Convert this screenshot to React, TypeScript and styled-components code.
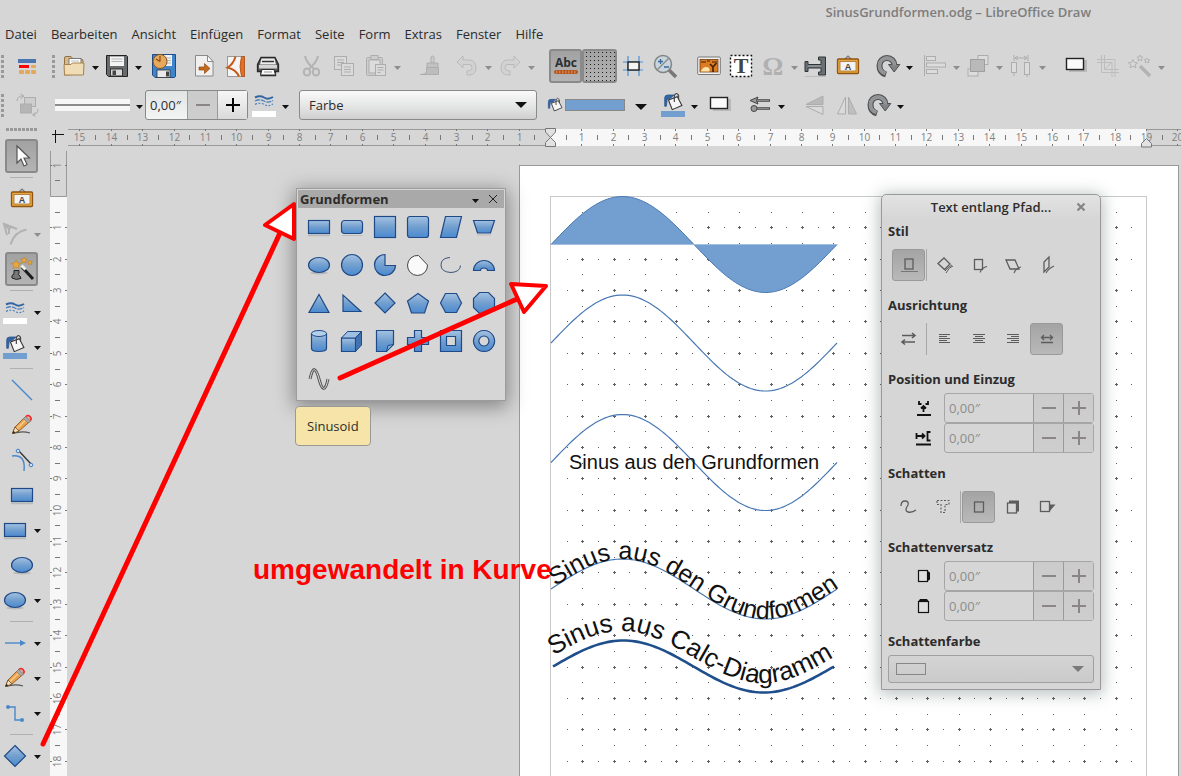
import React from "react";
import styled, { createGlobalStyle } from "styled-components";

const GlobalStyle = createGlobalStyle`
  * { box-sizing: border-box; }
  html, body { margin: 0; height: 100%; background: #d6d6d6; }
  body { font: 13px/20px "Open Sans", "Noto Sans", sans-serif; color: #2c2c2c; }
  button, input, select { font: inherit; color: inherit; margin: 0; padding: 0; border: 0; background: none; border-radius: 0; }
  svg { display: block; flex: none; }
`;

/* ---------- frame ---------- */

const Window = styled.div`
  position: relative;
  display: flex;
  flex-direction: column;
  height: 100vh;
  overflow: hidden;
  background: #d6d6d6;
`;

const TitleBar = styled.header`
  display: flex;
  justify-content: flex-end;
  padding: 2px 90px 2px 0;
  font-size: 13px;
  font-weight: 600;
  color: #7d7d7d;
`;

const MenuBar = styled.nav`
  display: flex;
  gap: 14px;
  padding: 0 5px 1px;
`;

const MenuItem = styled.button`
  white-space: nowrap;
`;

const Toolbar = styled.div<{ $height: number }>`
  display: flex;
  align-items: center;
  height: ${(p) => p.$height}px;
  flex: none;
`;

const Handle = styled.span`
  width: 3px;
  height: 23px;
  margin: 0 3px 0 1px;
  flex: none;
  background: repeating-linear-gradient(#999 0 3px, transparent 3px 5px);
`;

const Space = styled.span<{ $w: 4 | 8 | 12 }>`
  width: ${(p) => p.$w}px;
  flex: none;
`;

const Tool = styled.button<{ $active?: boolean; $w?: number }>`
  display: flex;
  align-items: center;
  justify-content: center;
  flex: none;
  width: ${(p) => p.$w ?? 32}px;
  height: 34px;
  border: ${(p) => (p.$active ? "2px solid #8a8a8a" : "0")};
  border-radius: 3px;
  background: ${(p) => (p.$active ? "linear-gradient(#a2a2a2, #b4b4b4)" : "none")};
`;

const CaretButton = styled.button<{ $w?: number }>`
  display: flex;
  align-items: center;
  justify-content: center;
  width: ${(p) => p.$w ?? 11}px;
  height: 34px;
  padding-top: 3px;
  flex: none;
`;

const LinePreview = styled.button`
  display: flex;
  align-items: center;
  width: 75px;
  height: 12px;
  flex: none;
  background: #f7f7f7;
  &::before {
    content: "";
    flex: 1;
    height: 2px;
    background: #8c8c8c;
  }
`;

const ColorPreview = styled.button`
  width: 60px;
  height: 12px;
  flex: none;
  border: 1px solid #888;
  background: #729fcf;
`;

const Spin = styled.div<{ $disabled?: boolean; $w: number }>`
  display: flex;
  width: ${(p) => p.$w}px;
  height: 30px;
  flex: none;
  border: 1px solid ${(p) => (p.$disabled ? "#a6a6a6" : "#888")};
  border-radius: 3px;
  color: ${(p) => (p.$disabled ? "#8c8c8c" : "#2c2c2c")};
  background: ${(p) => (p.$disabled ? "#d6d6d6" : "linear-gradient(#e2e4e4, #f3f4f4)")};
`;

const SpinEntry = styled.input`
  flex: 1;
  min-width: 0;
  padding: 0 4px;
`;

const SpinButton = styled.button<{ $on?: boolean }>`
  display: flex;
  align-items: center;
  justify-content: center;
  width: 30px;
  flex: none;
  border-left: 1px solid #9a9a9a;
  color: ${(p) => (p.$on ? "#000" : "#8a8686")};
  background: ${(p) => (p.$on ? "linear-gradient(#f6f6f6, #dadada)" : "linear-gradient(#cbcbcb, #cecece)")};
`;

const SelectBox = styled.div<{ $w?: number; $flat?: boolean }>`
  position: relative;
  display: flex;
  align-items: center;
  height: ${(p) => (p.$flat ? 28 : 30)}px;
  width: ${(p) => (p.$w ? p.$w + "px" : "auto")};
  flex: none;
  border: 1px solid ${(p) => (p.$flat ? "#a0a0a0" : "#8a8a8a")};
  border-radius: 3px;
  background: ${(p) => (p.$flat ? "linear-gradient(#d4d4d4, #cacaca)" : "linear-gradient(#fafafa, #e2e3e3 60%, #cfcfcf)")};
`;

const Select = styled.select`
  appearance: none;
  width: 100%;
  height: 100%;
  padding: 0 30px 0 9px;
`;

const SelectArrow = styled.span`
  position: absolute;
  right: 9px;
  pointer-events: none;
`;

const EmptySwatch = styled.span`
  position: absolute;
  left: 7px;
  width: 30px;
  height: 12px;
  border: 1px solid #8a8686;
  pointer-events: none;
`;

const Body = styled.main`
  display: flex;
  flex: 1;
  min-height: 0;
`;

const Toolbox = styled.aside`
  display: flex;
  flex-direction: column;
  width: 50px;
  flex: none;
  padding: 5px 0 0;
  overflow: hidden;
`;

const ToolboxHandle = styled.span`
  width: 31px;
  height: 3px;
  margin: 0 6px 7px;
  flex: none;
  background: repeating-linear-gradient(90deg, #999 0 3px, transparent 3px 4px);
`;

const ToolboxRow = styled.div<{ $split?: boolean }>`
  display: flex;
  align-items: center;
  justify-content: ${(p) => (p.$split ? "flex-start" : "center")};
  width: 43px;
  height: 35px;
  flex: none;
`;

const ToolboxRule = styled.hr`
  width: 23px;
  height: 1px;
  margin: 4px 10px 3px;
  flex: none;
  border: 0;
  background: #b0b0b0;
`;

const Work = styled.div`
  display: flex;
  flex-direction: column;
  flex: 1;
  min-width: 0;
`;

const RulerRow = styled.div`
  display: flex;
  height: 28px;
  flex: none;
  padding-top: 5px;
`;

const HRuler = styled.div`
  flex: 1;
  min-width: 0;
  overflow: hidden;
`;

const CanvasRow = styled.div`
  display: flex;
  flex: 1;
  min-height: 0;
`;

const VRuler = styled.div`
  width: 18px;
  flex: none;
  overflow: hidden;
`;

const Canvas = styled.section`
  position: relative;
  flex: 1;
  min-width: 0;
  overflow: hidden;
`;

/* ---------- floating windows ---------- */

const ShapesWindow = styled.section`
  position: absolute;
  left: 228px;
  top: 37px;
  width: 210px;
  padding: 1px 1px 2px;
  border: 1px solid #9c9c9c;
  background: #d6d6d6;
  box-shadow: 0 4px 18px 2px rgba(0, 0, 0, 0.38);
`;

const ShapesHeader = styled.header`
  display: flex;
  align-items: center;
  height: 18px;
  padding: 0 4px 0 2px;
  background: #a9a9a9;
`;

const WindowTitle = styled.h2`
  flex: 1;
  margin: 0;
  font-size: 13px;
  font-weight: 700;
  line-height: 18px;
`;

const ShapesGrid = styled.div`
  display: grid;
  grid-template-columns: repeat(6, 33px);
  grid-auto-rows: 38px;
  padding-left: 4px;
`;

const ShapeButton = styled.button`
  display: flex;
  align-items: center;
  justify-content: center;
`;

const Tooltip = styled.div`
  position: absolute;
  left: 227px;
  top: 255px;
  padding: 9px 11px;
  border: 1px solid #999;
  border-radius: 4px;
  background: #f7e4a9;
`;

const PathWindow = styled.section`
  position: absolute;
  left: 813px;
  top: 43px;
  width: 220px;
  padding: 0 6px 6px;
  border: 1px solid #999;
  border-radius: 5px 5px 0 0;
  background: linear-gradient(#e2e2e2, #d6d6d6 24px);
  box-shadow: 0 2px 16px 2px rgba(70, 90, 90, 0.38);
`;

const PathHeader = styled.header`
  display: flex;
  align-items: center;
  justify-content: center;
  height: 24px;
  margin-bottom: 2px;
`;

const PathTitle = styled.h2`
  flex: 1;
  margin: 0 0 0 26px;
  text-align: center;
  font-size: 13px;
  font-weight: 600;
`;

const CloseButton = styled.button`
  display: flex;
  width: 26px;
  height: 20px;
  align-items: center;
  justify-content: center;
`;

const Section = styled.fieldset<{ $gap: number }>`
  margin: 0 0 ${(p) => p.$gap}px;
  padding: 0;
  border: 0;
  min-width: 0;
`;

const SectionLabel = styled.legend`
  padding: 0;
  font-weight: 700;
`;

const ButtonRow = styled.div`
  display: flex;
  gap: 1px;
  padding: 8px 4px 0;
`;

const PathButton = styled.button<{ $active?: boolean }>`
  display: flex;
  align-items: center;
  justify-content: center;
  width: 33px;
  height: 32px;
  border: ${(p) => (p.$active ? "1px solid #999" : "0")};
  border-radius: 3px;
  background: ${(p) => (p.$active ? "linear-gradient(#a4a4a4, #b9b9b9)" : "none")};
`;

const Divider = styled.span`
  width: 1px;
  height: 32px;
  background: #a8a8a8;
`;

const SpinRow = styled.label`
  display: flex;
  align-items: center;
  justify-content: flex-end;
  gap: 9px;
`;

const SpinStack = styled.div`
  padding-top: 4px;
`;

const Annotations = styled.svg`
  position: absolute;
  inset: 0;
  width: 100%;
  height: 100%;
  pointer-events: none;
`;

/* ---------- icons ---------- */

const BLUE = { fill: "url(#blue)", stroke: "#204a87", strokeWidth: 1.2 };
const GREY = { fill: "#cdcdcd", stroke: "#adadad", strokeWidth: 1 };
const LINE = { fill: "none", stroke: "#5c5c5c", strokeWidth: 1.3 };
const CURVE = { fill: "none", stroke: "#4a88cc", strokeWidth: 1.4 };

const pencil = (
  <>
    <path d="M3 20.500q9-3 17-.5" fill="none" stroke="#555" strokeWidth="1.2" />
    <path d="M2.500 20.500l2.500-6.500L15.500 3.500l5 4.500L9 18z" fill="#e9a14c" stroke="#8a5a24" strokeWidth=".9" />
    <path d="M6.500 16L17.500 5.500" stroke="#f9cf94" strokeWidth="1.300" />
    <path d="M2.500 20.500l2.500-6.500 4 4z" fill="#f6dfbb" stroke="#6b4a24" strokeWidth=".8" />
    <path d="M2.500 20.500l1-2.700 1.700 1.700z" fill="#222" />
    <path d="M13.500 5.500l4.500 4.500 2.500-2-5-4.500z" fill="#a9a9a9" stroke="#777" strokeWidth=".6" />
    <path d="M16 3.500q2-2 4 0t.5 4" fill="#d5a9a0" stroke="#ef2929" strokeWidth="1.600" />
  </>
);

const bucket = (
  <>
    <path d="M2 17V7q0-3.500 4-3.500h7L9 7.500l-4 1-1 8.500z" fill="#3465a4" stroke="#204a87" strokeWidth=".8" />
    <path d="M6.500 9.500L17 5.500 22.500 16 11 21z" fill="#f6f6f6" stroke="#333" strokeWidth="1.300" />
    <path d="M13.500 12V4q2.500-4.500 5 0v5" fill="none" stroke="#444" strokeWidth="1.400" />
  </>
);

const rotate = (
  <>
    <path d="M10 20.500Q3.500 18.500 3.500 11.500a7.500 7.500 0 0 1 15 0" fill="none" stroke="#4d4f51" strokeWidth="6" />
    <path d="M12.500 10.500h11.300L18.200 18z" fill="#808386" stroke="#4d4f51" strokeWidth="1" />
    <path d="M9.500 19.500Q3.500 17.500 3.500 11.500a7.500 7.500 0 0 1 15 0" fill="none" stroke="#929496" strokeWidth="3.800" />
  </>
);

const label = (
  <>
    <path d="M9 5l3-3 3 3" fill="none" stroke="#777" strokeWidth="1.200" />
    <rect x="1.500" y="5" width="21" height="14.500" rx="1" fill="#e9a840" stroke="#8f5312" strokeWidth="1.300" />
    <rect x="4" y="7.500" width="16" height="9.500" fill="#f3f3f3" stroke="#a8702c" strokeWidth=".8" />
    <text x="12" y="15.500" textAnchor="middle" fontFamily="Liberation Sans, sans-serif" fontWeight="700" fontSize="9" fill="#444">A</text>
  </>
);

const undo = <path d="M2 8l6-6v4h7q6 1 6 8 0 6-6 7h-3v-4q5 0 5-3.500T14 10.500H8V14z" fill="#d2d2d2" stroke="#bababa" />;

const ICONS: Record<string, React.ReactNode> = {
  layout: (
    <>
      <rect x="3" y="5" width="18" height="4" fill="#4b75b0" />
      <rect x="4" y="11" width="10" height="3" fill="#f00" />
      {[[16, 11], [4, 16], [10, 16], [16, 16]].map(([x, y]) => (
        <rect key={x + "-" + y} x={x} y={y} width="5" height={y === 11 ? 3 : 4} rx="1" fill="#e2a95c" />
      ))}
    </>
  ),
  open: (
    <>
      <path d="M2.500 21V4q0-1.500 1.500-1.500h5L11 5h8q2 0 2 2v13z" fill="#d9b98a" stroke="#8f7044" />
      <path d="M7 4.500h12V12H7z" fill="#fff" stroke="#777" />
      <path d="M9 7h8M9 9.500h8" stroke="#bbb" />
      <path d="M2 10.500h7l1.500-1.500H22l-.5 12h-19z" fill="#f0dcb5" stroke="#a5834f" />
    </>
  ),
  save: (
    <>
      <path d="M1.500 1.500h20l1 1v20h-19l-2-2z" fill="#676b6d" stroke="#222" />
      <rect x="5" y="2.500" width="14" height="9.500" fill="#f4f4f4" />
      <path d="M6.500 5h11M6.500 7.500h11" stroke="#b5b5b5" />
      <rect x="5.500" y="15" width="12" height="7" fill="#d8d8d8" stroke="#333" />
      <rect x="7.500" y="16.500" width="3.500" height="4.500" fill="#444" />
    </>
  ),
  saveAs: (
    <>
      <path d="M.5.5h23v22l-1 1H3l-2.500-2.500z" fill="#3f85cb" stroke="#1f4b86" />
      <rect x="12" y="1" width="8" height="11" fill="#f2f2f2" />
      <path d="M14 4h5M14 6.500h5M14 9h5" stroke="#b5b5b5" />
      <rect x="5" y="16" width="13" height="7.500" fill="#e9e9e9" stroke="#333" strokeWidth=".8" />
      <rect x="14" y="17.500" width="3" height="5" fill="#444" />
      <circle cx="8" cy="7.500" r="7" fill="#e9a95c" stroke="#7f5423" />
      <path d="M8 7.500V2M8 7.500L4 5" stroke="#8a4a12" strokeWidth="1.200" />
    </>
  ),
  export: (
    <>
      <path d="M3.500 1.500h12l5.500 6v14.500h-17.500z" fill="#f0f0f0" stroke="#8a8a8a" />
      <path d="M15.500 1.500v6H21z" fill="#fff" stroke="#8a8a8a" />
      <path d="M7 13h5.500v-3.500l5.500 5-5.500 5V16H7z" fill="#c46a1e" stroke="#8f4a10" strokeWidth=".7" />
    </>
  ),
  pdf: (
    <>
      <rect x="3.500" y="2.500" width="17" height="20" fill="#f4f4f4" stroke="#999" />
      <path d="M11.500 2.500Q9.500 10 3.500 13.500Q12 15.500 15 22.500" fill="none" stroke="#c4591b" strokeWidth="2" />
      <path d="M20.500 2.500h-3q-3 10 0 20h3z" fill="#e0702a" stroke="#b04c12" strokeWidth=".8" />
    </>
  ),
  print: (
    <>
      <path d="M5 3.500h14l3.500 7v7h-3v4H5v-4H1.500v-7z" fill="#555" stroke="#2a2a2a" strokeWidth="1.300" />
      <path d="M5.500 4.500h13l1.500 6H4z" fill="#ececec" />
      <path d="M6 7.500h12" stroke="#333" strokeWidth="1.500" />
      <rect x="3" y="11" width="18" height="3.500" fill="#d5d5d5" />
      <path d="M6 15.500h12l1.500 5.500h-15z" fill="#fafafa" stroke="#333" />
      <path d="M8 18h8" stroke="#999" />
    </>
  ),
  cut: (
    <g fill="none" stroke="#b3b3b3">
      <path d="M5 2q1 6 9 13M18 2q-1 6-9 13" strokeWidth="2" />
      <ellipse cx="7" cy="18" rx="3.200" ry="3.500" strokeWidth="2" />
      <ellipse cx="16" cy="18" rx="3.200" ry="3.500" strokeWidth="2" />
    </g>
  ),
  copy: (
    <g {...GREY}>
      <rect x="2.500" y="2.500" width="12" height="13" fill="#dadada" />
      <path d="M5 6h7M5 8.500h7M5 11h4" />
      <rect x="9.500" y="9.500" width="12" height="12" fill="#dadada" />
      <path d="M12 13h7M12 15.500h7M12 18h7" />
    </g>
  ),
  paste: (
    <g {...GREY}>
      <rect x="2.500" y="3.500" width="16" height="18" rx="1" />
      <rect x="7" y="1.500" width="7" height="4" />
      <rect x="5" y="6" width="11" height="13" fill="#dcdcdc" />
      <rect x="11.500" y="10.500" width="10" height="11" fill="#dadada" />
      <path d="M13.500 13.500h6M13.500 16h6M13.500 18.500h3" />
    </g>
  ),
  brush: (
    <g {...GREY}>
      <path d="M1 20.500q6 0 6.500-3v-4h12v7z" fill="#bdbdbd" />
      <path d="M12 9V3q1.500-2 3 0v6z" />
      <path d="M8 9h11v4.500H8z" fill="#c2c2c2" />
    </g>
  ),
  undo,
  redo: <g transform="matrix(-1 0 0 1 24 0)">{undo}</g>,
  spell: (
    <>
      <text x="12" y="13" textAnchor="middle" fontFamily="Open Sans, sans-serif" fontWeight="700" fontSize="12" fill="#2b2f33">Abc</text>
      <path d="M2 18h20" fill="none" stroke="#a8572a" strokeWidth="4" strokeLinecap="round" />
      <path d="M2 18h20" fill="none" stroke="#e07a34" strokeWidth="3" strokeDasharray="1.500 1.500" />
    </>
  ),
  grid: (
    <path
      d={[-2, 2, 6, 10, 14, 18, 22, 26].map((y) => `M-2 ${y + 0.5}h29`).join("")}
      stroke="#1c1c1c"
      strokeDasharray="1 3"
    />
  ),
  snap: (
    <>
      <path d="M7 2v20M18 2v20M2 8h20M2 16h20" stroke="#4a90d9" strokeWidth="1.200" />
      <rect x="7" y="8" width="11" height="8" fill="#f4f4f4" stroke="#222" strokeWidth="1.400" />
    </>
  ),
  zoom: (
    <>
      <path d="M16 16l7 7" stroke="#777" strokeWidth="3.600" />
      <circle cx="10" cy="10" r="8.500" fill="#c9d5de" stroke="#848484" strokeWidth="1.500" />
      <path d="M4.500 15.500L15.500 4.500" stroke="#888" strokeWidth="1.200" />
      <path d="M5 7.500h5M7.500 5v5M11 13h5" stroke="#3b6a9c" strokeWidth="1.300" />
    </>
  ),
  image: (
    <>
      <rect x=".7" y="3" width="22.600" height="17.500" rx="1" fill="#f3f3f3" stroke="#777" />
      <rect x="3" y="5.500" width="18" height="12.500" fill="#dd7d23" stroke="#6b3c14" strokeWidth=".8" />
      <path d="M3.500 17.500q4-7 9-3v3z" fill="#fbe3a4" />
      <path d="M16 18v-5l-3-3M16 13l3.500-4" fill="none" stroke="#40200a" strokeWidth="1.600" />
      <path d="M4 8h5M10 7h3M15 8h5" stroke="#7a3c0c" strokeWidth="1.500" />
    </>
  ),
  text: (
    <>
      <rect x="1.500" y="1.500" width="21" height="21" fill="#fff" stroke="#111" strokeWidth="1.400" strokeDasharray="2 2" />
      <text x="12" y="19" textAnchor="middle" fontFamily="Liberation Serif, serif" fontWeight="700" fontSize="22" fill="#444">T</text>
    </>
  ),
  omega: (
    <text x="12" y="21" textAnchor="middle" fontFamily="Liberation Serif, serif" fontWeight="700" fontSize="26" fill="#b0b0b0">Ω</text>
  ),
  special: (
    <>
      <path d="M1 7.500v10h3V14h13v4h-2.500v3h7V3h-7v3H17v4.500H4v-3z" fill="#6b7074" stroke="#2e3436" />
      <path d="M4 12h13" stroke="#a9adb0" />
      <path d="M1 22.500h21" stroke="#bcbcbc" />
    </>
  ),
  label,
  rotate,
  align: (
    <g {...GREY} fill="#dcdcdc">
      <path d="M1.500 1v21" />
      <rect x="3.500" y="2.500" width="9" height="4" />
      <rect x="3.500" y="9" width="19" height="4" />
      <rect x="3.500" y="15.500" width="11" height="4" />
    </g>
  ),
  arrange: (
    <g {...GREY}>
      <rect x="12" y="1.500" width="10" height="9" fill="#dcdcdc" />
      <rect x="2" y="15" width="10" height="7" fill="#dcdcdc" />
      <rect x="4.500" y="5.500" width="14" height="12" fill="#b9b9b9" stroke="#9f9f9f" />
    </g>
  ),
  distribute: (
    <g {...GREY} fill="#dcdcdc">
      <path d="M5 1v6M19 1v6M6 4h12M9 2L6 4l3 2M15 2l3 2-3 2" fill="none" />
      <rect x="2.500" y="8.500" width="5" height="10" />
      <rect x="15.500" y="8.500" width="5" height="12" />
      <path d="M5 19v3M18 21v2" />
    </g>
  ),
  shadow: (
    <>
      <rect x="5" y="6" width="18" height="12" fill="#b8b8b8" />
      <rect x="2.500" y="4.500" width="17" height="11" fill="#fbfbfb" stroke="#222" strokeWidth="1.400" />
    </>
  ),
  crop: (
    <g fill="none" stroke="#bdbdbd">
      <path d="M5.500 1v17.500H23" strokeWidth="1" />
      <path d="M8.500 1v14.500H23M1 5.500h18V23M1 8.500h15V23" strokeWidth="1" />
      <path d="M9 15l6-6" />
    </g>
  ),
  wandGrey: (
    <g fill="none" stroke="#b3b3b3">
      <path d="M12 12l10 10" strokeWidth="3.500" />
      <path d="M5 5.500l1.500 3 3 .3-2.300 2 .7 3L5 12.200l-3 1.600.7-3-2.300-2 3-.3zM12 1l1 2 2 .2-1.500 1.500.5 2-2-1-2 1 .5-2L9 3.200l2-.2zM19 4l1 1.500 1.800.2-1.300 1.300.4 1.800-1.900-.9-1.700.9.300-1.800L16.300 5.700l1.800-.2z" />
    </g>
  ),
  transform: (
    <g {...GREY}>
      <rect x="9.500" y="4.500" width="11" height="9" />
      <rect x="5.500" y="11" width="11" height="9" fill="#b5b5b5" />
      <path d="M2 8q0-5 6-5M5.500 1L9 3 5.500 6M23 16q0 5-5 6M20.500 19l-3 3 3 1.500" fill="none" />
    </g>
  ),
  lineColor: (
    <>
      <path d="M3 4.500q5-2.500 9 0t9-.5" fill="none" stroke="#3465a4" strokeWidth="2" />
      <path d="M3 8q5-2.500 9 0t9-.5" fill="none" stroke="#4b7fc0" strokeWidth="1.300" strokeDasharray="5 1" />
      <path d="M3 11.500q5-2.500 9 0t9-.5" fill="none" stroke="#4b7fc0" strokeWidth="1.200" strokeDasharray="2 1.500" />
      <rect x="0" y="18" width="24" height="6" fill="#fff" />
    </>
  ),
  fillColor: (
    <>
      <g transform="translate(2 -1) scale(.84)">{bucket}</g>
      <rect x="0" y="18" width="24" height="6" fill="#729fcf" />
    </>
  ),
  bucket,
  arrows: (
    <g stroke="#444" fill="#9a9a9a">
      <path d="M8 7.500h14M8 15.500h14" strokeWidth="2.400" />
      <path d="M8 7.500h13M8 15.500h13" stroke="#9a9a9a" strokeWidth=".8" />
      <path d="M2 7.500l8-3.500-1.500 3.500L10 11z" />
      <circle cx="6" cy="15.500" r="3" />
    </g>
  ),
  flipV: (
    <g {...GREY}>
      <path d="M3 11.500L20 3v8.500z" fill="#b9b9b9" />
      <path d="M3 13.500L20 21.500v-8z" fill="#dadada" />
    </g>
  ),
  flipH: (
    <g {...GREY}>
      <path d="M10.500 4v17H2.500z" fill="#dadada" />
      <path d="M13.500 4v17h8z" fill="#bfbfbf" />
    </g>
  ),
  select: <path d="M7 2v17l4-4 3 7 3-1.500-3-6.500h5.500z" fill="#fff" stroke="#555" strokeWidth="1.200" />,
  pathText: (
    <>
      <path d="M4 13L1 2l13 5M2 3l4 4 2 -2M6 12V6" fill="none" stroke="#b2b2b2" strokeWidth="2" />
      <path d="M7.500 22.500Q11 10 23.500 7.500" fill="none" stroke="#b2b2b2" strokeWidth="2" />
    </>
  ),
  wand: (
    <>
      <path d="M12 10l11 12" stroke="#1c1c1c" strokeWidth="3" />
      <path d="M11.500 8.500l4 4" stroke="#eee" strokeWidth="3" />
      <path d="M6 3l1.500 3 3.500.3-2.700 2.200.9 3.200L6 10l-3 1.700.9-3.200L1 6.300 4.500 6zM14 0l1 2 2.500.2-2 1.600.7 2.400-2.200-1.300-2.200 1.300.7-2.400-2-1.600L13 2zM20 3l.8 1.500 1.700.2-1.200 1.200.3 1.700-1.600-.8-1.600.8.3-1.700L17.500 4.700l1.700-.2z" fill="#e9a840" stroke="#b8791c" strokeWidth=".5" />
      <path d="M2 21q-1-3 2-4V13.500h5V16q-2 1.500 1 3l1 2.500q-5 2-9-.5z" fill="#777" stroke="#222" />
    </>
  ),
  line: <path d="M2 2l20 20" {...CURVE} />,
  pencil,
  curve: (
    <>
      <path d="M2 8q14-2 12 15" {...CURVE} />
      <path d="M8 2l14 15" stroke="#333" strokeWidth="1.300" />
      <circle cx="8" cy="3" r="1.800" fill="#cfe2f5" stroke="#3f7fc6" />
      <circle cx="21" cy="17" r="1.800" fill="#cfe2f5" stroke="#3f7fc6" />
    </>
  ),
  rect: (
    <>
      <path d="M1 20.500h22" stroke="#b9b9b9" strokeWidth="1.500" />
      <rect x="1.500" y="5.500" width="21" height="13" {...BLUE} />
    </>
  ),
  ellipse: (
    <>
      <ellipse cx="12" cy="20" rx="9" ry="1.500" fill="#b9b9b9" />
      <ellipse cx="12" cy="12" rx="10.500" ry="7.500" {...BLUE} />
    </>
  ),
  arrow: (
    <>
      <path d="M2 12h17" {...CURVE} />
      <path d="M17 9l6 3-6 3z" fill="#4a88cc" />
    </>
  ),
  connector: (
    <>
      <path d="M5 6h7v13h7" {...CURVE} />
      <circle cx="5" cy="6" r="2" fill="#4a88cc" />
      <circle cx="19" cy="19" r="2" fill="#4a88cc" />
    </>
  ),
  diamondBig: <path d="M12 1.500L22.500 12 12 22.500 1.500 12z" {...BLUE} />,
};

const SHAPES: [string, React.ReactNode][] = [
  ["Rechteck", ICONS.rect],
  ["Rechteck, abgerundet", <><path key="s" d="M2 20.500h20" stroke="#bbb" /><rect key="r" x="1.500" y="5.500" width="21" height="13" rx="3" {...BLUE} /></>],
  ["Quadrat", <rect x="1.500" y="1.500" width="21" height="21" {...BLUE} />],
  ["Quadrat, abgerundet", <rect x="1.500" y="1.500" width="21" height="21" rx="2.500" {...BLUE} />],
  ["Parallelogramm", <path d="M6.500 1.500h16l-5 21h-16z" {...BLUE} />],
  ["Trapez", <><path key="s" d="M5 20h14" stroke="#bbb" /><path key="t" d="M1.500 5.500h21l-4 12.500h-13z" {...BLUE} /></>],
  ["Ellipse", ICONS.ellipse],
  ["Kreis", <circle cx="12" cy="12" r="10.500" {...BLUE} />],
  ["Kreissektor", <path d="M12 1.500v11h10.500A10.500 10.500 0 1 1 12 1.500z" {...BLUE} />],
  ["Kreissegment", <path d="M12.500 2.500l9 9.500A10 10 0 1 1 12.500 2.500z" fill="#fafafa" stroke="#444" />],
  ["Kreisbogen", <path d="M11 4.500Q2 5 2 12t10 7.500q9-.5 9.500-7" fill="none" stroke="#3b5578" />],
  ["Halbbogen", <path d="M1.500 17.500a10.500 10 0 0 1 21 0h-7a3.500 2.500 0 0 0-7 0z" {...BLUE} />],
  ["Dreieck", <path d="M12 3.500L22 21.500H2z" {...BLUE} />],
  ["Rechtwinkliges Dreieck", <path d="M3 4v16.500h18z" {...BLUE} />],
  ["Raute", <path d="M12 2l10 10-10 10L2 12z" {...BLUE} />],
  ["Fünfeck", <path d="M12 2.500l10.500 7.500-4 12H5.500l-4-12z" {...BLUE} />],
  ["Sechseck", <path d="M6.500 2.500h11L22.500 12l-5 9.500h-11L1.500 12z" {...BLUE} />],
  ["Achteck", <path d="M7.500 1.500h9l6 6v9l-6 6h-9l-6-6v-9z" {...BLUE} />],
  ["Zylinder", <><path key="a" d="M4.500 4.500v15q0 3 7.500 3t7.500-3v-15z" {...BLUE} /><ellipse key="b" cx="12" cy="4.500" rx="7.500" ry="3" fill="#b3cfe9" stroke="#204a87" /></>],
  ["Würfel", <><path key="a" d="M1.500 9h14v13.500h-14z" {...BLUE} /><path key="b" d="M1.500 9l6-6.500h14L15.500 9z" fill="#9fc0e0" stroke="#204a87" /><path key="c" d="M15.500 9l6-6.500V16l-6 6.500z" fill="#4273b0" stroke="#204a87" /></>],
  ["Gefaltete Ecke", <><path key="a" d="M3.500 1.500h17v14l-7 7h-10z" {...BLUE} /><path key="b" d="M13.500 22.500l1.500-6 5.500-1z" fill="#7fabd8" stroke="#204a87" /></>],
  ["Kreuz", <path d="M8.500 1.500h7v7h7v7h-7v7h-7v-7h-7v-7h7z" {...BLUE} />],
  ["Rahmen", <path d="M1.500 1.500h21v21h-21zM7.500 7.500v9h9v-9z" fillRule="evenodd" {...BLUE} />],
  ["Ring", <path d="M12 1.500a10.500 10.500 0 1 0 .1 0zM12 7a5 5 0 1 1-.1 0z" fillRule="evenodd" {...BLUE} />],
  ["Sinusoid", <><path key="a" d="M3 12C6-2 9 1 12 12s6 14 9 0" fill="none" stroke="#555" strokeWidth="3" /><path key="b" d="M3 12C6-2 9 1 12 12s6 14 9 0" fill="none" stroke="#e0e0e0" strokeWidth="1" /></>],
];

const PATH_ICONS: Record<string, React.ReactNode> = {
  off: <><rect key="a" x="8" y="6" width="8" height="10" {...LINE} /><path key="b" d="M4 18.500h17" stroke="#777" /></>,
  turn: <><path key="a" d="M11 5l6 6-5.500 5.500L5 10.500z" {...LINE} /><path key="b" d="M13 20q3-6 7-7M12 18q3-4 7-6" {...LINE} strokeWidth="1" /></>,
  upright: <><rect key="a" x="7.500" y="6.500" width="8" height="10" {...LINE} /><path key="b" d="M13 19.500q2-5 7-6" {...LINE} strokeWidth="1.100" /></>,
  slantH: <><path key="a" d="M5 7h9l4 9H9z" {...LINE} /><path key="b" d="M13 20q2-5 7-6" {...LINE} strokeWidth="1.100" /></>,
  slantV: <><path key="a" d="M9 9l5-5v10l-5 5z" {...LINE} /><path key="b" d="M11 20q3-5 8-7" {...LINE} strokeWidth="1.100" /></>,
  swap: <path d="M5 8.500h13M5 15h13M15 6l3 2.500-3 2.500M8 12.500L5 15l3 2.500" {...LINE} strokeWidth="1.600" />,
  left: <path d="M6 7.500h11M6 9.500h8M6 11.500h11M6 13.500h8M6 15.500h11" {...LINE} strokeWidth="1" />,
  center: <path d="M6 7.500h12M8 9.500h8M6 11.500h12M8 13.500h8M6 15.500h12" {...LINE} strokeWidth="1" />,
  right: <path d="M6 7.500h12M10 9.500h8M6 11.500h12M10 13.500h8M6 15.500h12" {...LINE} strokeWidth="1" />,
  auto: <path d="M6.500 10.500h11M9 8L6.500 10.500 9 13M15 8l2.500 2.500L15 13M6 15.500h12" {...LINE} />,
  outline: <path d="M4 11q0-5 4-5t3 4q-4 6 0 7t8-2" {...LINE} />,
  dashedT: <path d="M6 5.500h12v4h-4v8h-4v-8H6z" {...LINE} strokeDasharray="2 1.500" strokeWidth="1.100" />,
  noShadow: <rect x="7.500" y="7" width="9" height="10" {...LINE} />,
  vertShadow: <><rect key="a" x="8" y="5.500" width="10" height="11" fill="#5c5c5c" /><rect key="b" x="6.500" y="8" width="9" height="10" fill="#d6d6d6" stroke="#5c5c5c" strokeWidth="1.300" /></>,
  slantShadow: <><path key="a" d="M14 9.500h6.500L14 17z" fill="#5c5c5c" /><rect key="b" x="5.500" y="6.500" width="9" height="10" fill="#d6d6d6" stroke="#5c5c5c" strokeWidth="1.300" /></>,
  distance: <path d="M8 5v3h2.500M17 5v3h-2.500M6 19h14M12.500 16V10M10 12.500l2.500-2.500 2.500 2.500" fill="none" stroke="#111" strokeWidth="1.800" />,
  indent: <path d="M5.500 10h8M11 7.500l2.500 2.500-2.500 2.500M5.500 7v6M19.500 6h-3v8.500h3M5 18.500h15" fill="none" stroke="#111" strokeWidth="1.800" />,
  shadowX: <><rect key="a" x="7.500" y="6.500" width="9" height="11" fill="#dedede" stroke="#111" strokeWidth="1.200" /><path key="b" d="M16 6.500l3 2v7l-3 2z" fill="#111" /></>,
  shadowY: <><rect key="a" x="7.500" y="7.500" width="10" height="11" fill="#dedede" stroke="#111" strokeWidth="1.200" /><path key="b" d="M7 8l2-3h7l2 3z" fill="#111" /></>,
};

const Icon = ({ name, size = 24 }: { name: string; size?: number }) => (
  <svg width={size} height={size} viewBox="0 0 24 24" overflow="visible" aria-hidden="true">
    {ICONS[name] ?? PATH_ICONS[name]}
  </svg>
);

const Triangle = ({ color = "#111", wide }: { color?: string; wide?: boolean }) => (
  <svg width={wide ? 12 : 7} height={wide ? 6 : 4} viewBox="0 0 12 6" preserveAspectRatio="none" aria-hidden="true">
    <path d="M0 0h12L6 6z" fill={color} />
  </svg>
);

const Caret = ({ label: text, grey, w, wide }: { label: string; grey?: boolean; w?: number; wide?: boolean }) => (
  <CaretButton aria-label={text + " – Auswahl"} $w={w}>
    <Triangle color={grey ? "#8e8e8e" : "#111"} wide={wide} />
  </CaretButton>
);

type Item = { icon: string; name: string; caret?: boolean; grey?: boolean; active?: boolean; w?: number } | 4 | 8 | 12 | "handle";

const STANDARD: Item[] = [
  "handle", 4,
  { icon: "layout", name: "Seitenlayout" }, 8, "handle",
  { icon: "open", name: "Öffnen", caret: true },
  { icon: "save", name: "Speichern", caret: true }, 4,
  { icon: "saveAs", name: "Speichern unter" }, 8,
  { icon: "export", name: "Exportieren" },
  { icon: "pdf", name: "Als PDF exportieren" },
  { icon: "print", name: "Drucken" }, 12,
  { icon: "cut", name: "Ausschneiden" },
  { icon: "copy", name: "Kopieren" },
  { icon: "paste", name: "Einfügen", caret: true, grey: true }, 12,
  { icon: "brush", name: "Format übertragen" }, 4,
  { icon: "undo", name: "Rückgängig", caret: true, grey: true },
  { icon: "redo", name: "Wiederherstellen", caret: true, grey: true }, 12,
  { icon: "spell", name: "Rechtschreibung", active: true, w: 33 },
  { icon: "grid", name: "Raster anzeigen", active: true, w: 35 },
  { icon: "snap", name: "Hilfslinien" },
  { icon: "zoom", name: "Maßstab" }, 12,
  { icon: "image", name: "Bild" },
  { icon: "text", name: "Textfeld" },
  { icon: "omega", name: "Sonderzeichen", caret: true, grey: true },
  { icon: "special", name: "Fontwork" },
  { icon: "label", name: "Beschriftung" }, 8,
  { icon: "rotate", name: "Drehen", caret: true }, 4,
  { icon: "align", name: "Ausrichten", caret: true, grey: true },
  { icon: "arrange", name: "Anordnen", caret: true, grey: true },
  { icon: "distribute", name: "Verteilen", caret: true, grey: true }, 12,
  { icon: "shadow", name: "Schatten" },
  { icon: "crop", name: "Zuschneiden" },
  { icon: "wandGrey", name: "Filter", caret: true, grey: true },
];

const FORMAT_TAIL: Item[] = [
  8,
  { icon: "fillColor", name: "Füllfarbe", caret: true }, 4,
  { icon: "shadow", name: "Schatten" }, 8,
  { icon: "arrows", name: "Linienenden", caret: true }, 12,
  { icon: "flipV", name: "Vertikal spiegeln" },
  { icon: "flipH", name: "Horizontal spiegeln" },
  { icon: "rotate", name: "Transformationen", caret: true },
];

const Items = ({ list }: { list: Item[] }) => (
  <>
    {list.map((it, i) =>
      it === "handle" ? (
        <Handle key={i} />
      ) : typeof it === "number" ? (
        <Space key={i} $w={it} />
      ) : (
        <React.Fragment key={i}>
          <Tool aria-label={it.name} $active={it.active} $w={it.w}>
            <Icon name={it.icon} />
          </Tool>
          {it.caret && <Caret label={it.name} grey={it.grey} />}
        </React.Fragment>
      )
    )}
  </>
);

const TOOLBOX: ({ icon: string; name: string; caret?: boolean; grey?: boolean; active?: boolean } | null)[] = [
  { icon: "select", name: "Auswählen", active: true }, null,
  { icon: "label", name: "Textfeld" },
  { icon: "pathText", name: "Fontwork", caret: true, grey: true },
  { icon: "wand", name: "Effekte", active: true }, null,
  { icon: "lineColor", name: "Linienfarbe", caret: true },
  { icon: "fillColor", name: "Füllfarbe", caret: true }, null,
  { icon: "line", name: "Linie" },
  { icon: "pencil", name: "Freihandlinie" },
  { icon: "curve", name: "Kurve" },
  { icon: "rect", name: "Rechteck" },
  { icon: "rect", name: "Rechteckformen", caret: true },
  { icon: "ellipse", name: "Ellipse" },
  { icon: "ellipse", name: "Ellipsenformen", caret: true }, null,
  { icon: "arrow", name: "Linien und Pfeile", caret: true },
  { icon: "pencil", name: "Kurven und Polygone", caret: true },
  { icon: "connector", name: "Verbinder", caret: true }, null,
  { icon: "diamondBig", name: "Grundformen", caret: true },
];

const Plus = ({ minus }: { minus?: boolean }) => (
  <svg width="14" height="14" viewBox="0 0 14 14" aria-hidden="true">
    <path d={minus ? "M0 7h14" : "M0 7h14M7 0v14"} stroke="currentColor" strokeWidth="2" />
  </svg>
);

const SpinBox = ({ id, name, disabled, w }: { id: string; name: string; disabled?: boolean; w: number }) => (
  <Spin $disabled={disabled} $w={w}>
    <SpinEntry id={id} aria-label={name} defaultValue="0,00″" disabled={disabled} />
    <SpinButton aria-label={name + " verringern"}><Plus minus /></SpinButton>
    <SpinButton aria-label={name + " erhöhen"} $on={!disabled}><Plus /></SpinButton>
  </Spin>
);

/* ---------- rulers ---------- */

const UNIT = 596 / 19;

const HorizontalRuler = () => {
  const zero = 483;
  const at = (k: number) => Math.round(zero + k * UNIT) - 0.5;
  const ks = Array.from({ length: 36 }, (_, i) => i - 15);
  return (
    <svg width="1113" height="20" aria-hidden="true">
      <path d="M0 1.500H1113M0 17.500H1113" stroke="#999" />
      <rect x="483" y="1" width="595" height="17" fill="#f7f7f7" />
      {ks.map((k) => (
        <g key={k}>
          <path d={`M${at(k + 0.5)} 7v5`} stroke="#777" />
          {k !== 0 && (
            <>
              <path d={`M${at(k)} 1v2M${at(k)} 16v2`} stroke="#777" />
              <text x={at(k)} y="13" textAnchor="middle" fontSize="10" fontFamily="Open Sans, sans-serif" fill="#808080">
                {Math.abs(k)}
              </text>
            </>
          )}
        </g>
      ))}
      <path d="M477.500 .5h10v3.500l-5 5.500-5-5.500zM482.500 9.500l5 5v4h-10v-4z" fill="#e2e2e2" stroke="#777" />
      <path d="M1078.500 10.500l5 5v3.500h-10v-3.500z" fill="#e2e2e2" stroke="#777" />
    </svg>
  );
};

const VerticalRuler = () => {
  const zero = 46;
  const at = (k: number) => Math.round(zero + k * UNIT) - 0.5;
  const ks = Array.from({ length: 22 }, (_, i) => i - 1);
  return (
    <svg width="17" height="700" aria-hidden="true">
      <rect x="0" y="46" width="17" height="654" fill="#f7f7f7" />
      <path d="M.5 0v45.500h16V0" fill="none" stroke="#999" />
      {ks.map((k) => (
        <g key={k}>
          <path d={`M5 ${at(k + 0.5)}h5`} stroke="#777" />
          {k !== 0 && (
            <>
              <path d={`M0 ${at(k)}h2M15 ${at(k)}h2`} stroke="#777" />
              <text transform={`translate(11 ${at(k)}) rotate(-90)`} textAnchor="middle" fontSize="10" fontFamily="Open Sans, sans-serif" fill="#808080">
                {Math.abs(k)}
              </text>
            </>
          )}
        </g>
      ))}
    </svg>
  );
};

/* ---------- drawing ---------- */

const sine = (x0: number, x1: number, mid: number, amp: number, turns = 1) =>
  Array.from({ length: 97 }, (_, i) => {
    const t = (i / 96) * turns;
    return `${i ? "L" : "M"}${(x0 + (x1 - x0) * t).toFixed(2)} ${(mid - amp * Math.sin(2 * Math.PI * t)).toFixed(2)}`;
  }).join("");

const gridPath = () => {
  let d = "";
  const px = (k: number) => Math.round(483 + k * UNIT);
  const py = (k: number) => Math.round(45 + k * UNIT);
  const dot = (x: number, y: number) => `M${x} ${y + 0.5}h1`;
  for (let r = 1; r < 22; r++) {
    for (let c = 0; c < 19; c++) {
      if (c > 0) {
        d += dot(px(c), py(r - 0.5));
        d += `M${px(c) - 1} ${py(r) + 0.5}h3M${px(c) + 0.5} ${py(r) - 1}v3`;
      }
      d += dot(px(c + 0.5), py(r));
    }
  }
  return d;
};

const Drawing = () => (
  <svg width="1113" height="700" role="img" aria-label="Zeichnung mit Sinuskurven">
    <rect x="451.500" y="14.500" width="659" height="900" fill="#fff" stroke="#999" />
    <rect x="482.500" y="45.500" width="596" height="850" fill="none" stroke="#c8c8c8" />
    <path d={gridPath()} stroke="#606060" shapeRendering="crispEdges" />
    <path d={sine(483, 769, 93.5, 48) + "z"} fill="#729fcf" stroke="#4878b4" />
    <path d="M483 93.500h286" stroke="#a3c0e0" />
    <path d={sine(483, 769, 192, 48)} fill="none" stroke="#4878b4" strokeWidth="1.200" />
    <path d={sine(483, 769, 311.5, 48)} fill="none" stroke="#4878b4" strokeWidth="1.200" />
    <path d={sine(483, 769, 438, 30)} fill="none" stroke="#4878b4" strokeWidth="1.200" />
    <path d={sine(485, 766, 515.5, 26)} fill="none" stroke="#1f4e8c" strokeWidth="2.600" />
    <path id="curveA" d={sine(483, 769, 438, 30, 1.1)} fill="none" />
    <path id="curveB" d={sine(483, 766, 506, 26, 1.1)} fill="none" />
    <g fontFamily="Liberation Sans, sans-serif" fill="#111">
      <text x="501" y="318" fontSize="20">Sinus aus den Grundformen</text>
      <text fontSize="25"><textPath href="#curveA" startOffset="5">Sinus aus den Grundformen</textPath></text>
      <text fontSize="26"><textPath href="#curveB" startOffset="3">Sinus aus Calc-Diagramm</textPath></text>
    </g>
  </svg>
);

const PathButtons = ({ items, active, ruleAfter }: { items: [string, string][]; active: string; ruleAfter: number }) => (
  <ButtonRow>
    {items.map(([icon, name], i) => (
      <React.Fragment key={icon}>
        <PathButton aria-label={name} $active={icon === active}>
          <Icon name={icon} />
        </PathButton>
        {i === ruleAfter && <Divider />}
      </React.Fragment>
    ))}
  </ButtonRow>
);

const MENUS = ["Datei", "Bearbeiten", "Ansicht", "Einfügen", "Format", "Seite", "Form", "Extras", "Fenster", "Hilfe"];

export default function App() {
  return (
    <Window>
      <GlobalStyle />
      <TitleBar>SinusGrundformen.odg – LibreOffice Draw</TitleBar>
      <MenuBar>
        {MENUS.map((m) => (
          <MenuItem key={m}>{m}</MenuItem>
        ))}
      </MenuBar>
      <Toolbar $height={42}>
        <Items list={STANDARD} />
      </Toolbar>
      <Toolbar $height={36}>
        <Items list={["handle", 4, { icon: "transform", name: "Position und Größe" }, 12]} />
        <LinePreview aria-label="Linienstil" />
        <Space $w={4} />
        <Caret label="Linienstil" />
        <SpinBox id="line-width" name="Linienbreite" w={103} />
        <Items list={[{ icon: "lineColor", name: "Linienfarbe", caret: true }, 8]} />
        <SelectBox $w={238}>
          <Select aria-label="Füllung" defaultValue="Farbe">
            <option>Farbe</option>
          </Select>
          <SelectArrow><Triangle wide /></SelectArrow>
        </SelectBox>
        <Space $w={8} />
        <Tool aria-label="Füllfarbe" $w={20}><Icon name="bucket" size={16} /></Tool>
        <ColorPreview aria-label="Farbe wählen" />
        <Space $w={8} />
        <Caret label="Füllfarbe" w={16} wide />
        <Items list={FORMAT_TAIL} />
      </Toolbar>
      <Body>
        <Toolbox>
          <ToolboxHandle />
          {TOOLBOX.map((t, i) =>
            t === null ? (
              <ToolboxRule key={i} />
            ) : (
              <ToolboxRow key={i} $split={t.caret}>
                <Tool aria-label={t.name} $active={t.active} $w={t.caret ? 30 : 33}>
                  <Icon name={t.icon} />
                </Tool>
                {t.caret && <Caret label={t.name} grey={t.grey} w={15} />}
              </ToolboxRow>
            )
          )}
        </Toolbox>
        <Work>
          <RulerRow>
            <svg width="18" height="20" aria-hidden="true">
              <path d="M2 6.500h12M5.500 2v13" stroke="#111" />
            </svg>
            <HRuler><HorizontalRuler /></HRuler>
          </RulerRow>
          <CanvasRow>
            <VRuler><VerticalRuler /></VRuler>
            <Canvas>
              <Drawing />
              <ShapesWindow>
                <ShapesHeader>
                  <WindowTitle>Grundformen</WindowTitle>
                  <Caret label="Grundformen" w={22} />
                  <button aria-label="Grundformen schließen">
                    <svg width="14" height="10" viewBox="0 0 14 10" aria-hidden="true">
                      <path d="M3 1l8 8M11 1l-8 8" stroke="#222" />
                    </svg>
                  </button>
                </ShapesHeader>
                <ShapesGrid>
                  {SHAPES.map(([name, art]) => (
                    <ShapeButton key={name} aria-label={name}>
                      <svg width="24" height="24" viewBox="0 0 24 24" aria-hidden="true">{art}</svg>
                    </ShapeButton>
                  ))}
                </ShapesGrid>
              </ShapesWindow>
              <Tooltip role="tooltip">Sinusoid</Tooltip>
              <PathWindow>
                <PathHeader>
                  <PathTitle>Text entlang Pfad...</PathTitle>
                  <CloseButton aria-label="Schließen">
                    <svg width="10" height="10" viewBox="0 0 10 10" aria-hidden="true">
                      <path d="M1.500 1.500l7 7M8.500 1.500l-7 7" stroke="#858585" strokeWidth="2.200" />
                    </svg>
                  </CloseButton>
                </PathHeader>
                <Section $gap={14}>
                  <SectionLabel>Stil</SectionLabel>
                  <PathButtons active="off" ruleAfter={0} items={[["off", "Aus"], ["turn", "Drehen"], ["upright", "Aufrecht"], ["slantH", "Horizontal kippen"], ["slantV", "Vertikal kippen"]]} />
                </Section>
                <Section $gap={14}>
                  <SectionLabel>Ausrichtung</SectionLabel>
                  <PathButtons active="auto" ruleAfter={0} items={[["swap", "Orientierung"], ["left", "Links"], ["center", "Zentriert"], ["right", "Rechts"], ["auto", "Textgröße automatisch"]]} />
                </Section>
                <Section $gap={10}>
                  <SectionLabel>Position und Einzug</SectionLabel>
                  <SpinStack>
                    <SpinRow htmlFor="distance"><Icon name="distance" /><SpinBox id="distance" name="Abstand" disabled w={150} /></SpinRow>
                    <SpinRow htmlFor="indent"><Icon name="indent" /><SpinBox id="indent" name="Einzug" disabled w={150} /></SpinRow>
                  </SpinStack>
                </Section>
                <Section $gap={14}>
                  <SectionLabel>Schatten</SectionLabel>
                  <PathButtons active="noShadow" ruleAfter={1} items={[["outline", "Kontur"], ["dashedT", "Textkontur"], ["noShadow", "Kein Schatten"], ["vertShadow", "Vertikal"], ["slantShadow", "Kippen"]]} />
                </Section>
                <Section $gap={10}>
                  <SectionLabel>Schattenversatz</SectionLabel>
                  <SpinStack>
                    <SpinRow htmlFor="shadow-x"><Icon name="shadowX" /><SpinBox id="shadow-x" name="Abstand X" disabled w={150} /></SpinRow>
                    <SpinRow htmlFor="shadow-y"><Icon name="shadowY" /><SpinBox id="shadow-y" name="Abstand Y" disabled w={150} /></SpinRow>
                  </SpinStack>
                </Section>
                <Section $gap={0}>
                  <SectionLabel>Schattenfarbe</SectionLabel>
                  <SpinStack>
                    <SelectBox $flat>
                      <EmptySwatch />
                      <Select aria-label="Schattenfarbe" disabled />
                      <SelectArrow><Triangle wide color="#7a7a7a" /></SelectArrow>
                    </SelectBox>
                  </SpinStack>
                </Section>
              </PathWindow>
            </Canvas>
          </CanvasRow>
        </Work>
      </Body>
      <Annotations>
        <defs>
          <linearGradient id="blue" x1="0" y1="0" x2="0" y2="1">
            <stop offset="0" stopColor="#a4c2e2" />
            <stop offset=".5" stopColor="#729fcf" />
            <stop offset="1" stopColor="#4a8ad0" />
          </linearGradient>
        </defs>
        <g stroke="#f00" strokeWidth="4" strokeLinecap="round" strokeLinejoin="round">
          <path d="M43 744L280 233M340 378L517 299" strokeWidth="5" />
          <path d="M294 204l-29 21 29 14zM511 284l35 2-22 26z" fill="#fff" />
        </g>
        <text x="253" y="579" fontFamily="Liberation Sans, sans-serif" fontWeight="700" fontSize="28" fill="#f00">
          umgewandelt in Kurve
        </text>
      </Annotations>
    </Window>
  );
}
